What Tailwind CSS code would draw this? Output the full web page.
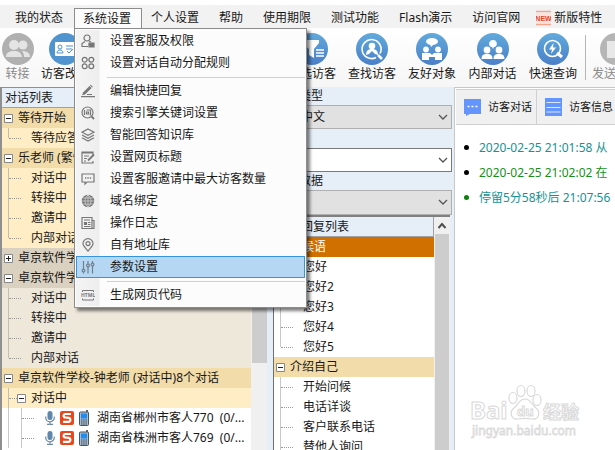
<!DOCTYPE html>
<html lang="zh-CN">
<head>
    <meta charset="UTF-8">
    <meta name="viewport" content="width=device-width, initial-scale=1.0">
    <title>系统设置</title>
    <script src="https://cdn.jsdelivr.net/npm/@tailwindcss/browser@4"></script>
    <style>
        body, button, input, select {
            font-family: 'Noto Sans', 'Noto Sans CJK SC', sans-serif;
        }
    </style>
</head>
<body class="h-screen overflow-hidden flex flex-col bg-white text-xs text-neutral-900 whitespace-nowrap">

    <!-- Menu bar -->
    <nav class="mt-[5px] h-[23px] shrink-0 flex items-end bg-[#f2f2f2] pl-[5px]">
        <button class="h-5 px-2.5">我的状态</button>
        <div class="relative z-10 ml-px -mr-px">
            <button class="block h-5 w-[68px] px-2 border border-b-0 border-[#8c8c8c] bg-[#fcfcfc] text-left">系统设置</button>

            <!-- Drop-down -->
            <div class="absolute left-0 top-5 w-[233px] border border-[#8c8c8c] bg-[#fcfcfc] p-px shadow-[3px_3px_3px_rgba(0,0,0,0.5)]">
                <ul class="bg-linear-to-r from-[#f4f4f4] from-[0px] via-[#eeeeee] via-[23px] to-[#fcfcfc] to-[24px]">
                    <li class="h-[22px]"><button class="flex items-center w-full h-full pl-[5px] gap-[15px]">
                        <svg class="size-3.5" viewBox="0 0 14 14" fill="none" stroke="#777" stroke-width="1.2"><circle cx="6" cy="4" r="3"/><path d="M4 7.5L1 9.5v3h6M8 7l2 1"/><path d="M8 9h5v4H8z" fill="#777"/></svg>
                        设置客服及权限</button></li>
                    <li class="h-[22px]"><button class="flex items-center w-full h-full pl-[5px] gap-[15px]">
                        <svg class="size-3.5" viewBox="0 0 14 14" fill="none" stroke="#777" stroke-width="1.3"><circle cx="3.7" cy="3.7" r="2.4"/><circle cx="10.3" cy="3.7" r="2.4"/><circle cx="3.7" cy="10.3" r="2.4"/><circle cx="10.3" cy="10.3" r="2.4"/></svg>
                        设置对话自动分配规则</button></li>
                    <li class="h-1.5 pt-[3px] pl-[31px]"><hr class="border-[#d0d0d0]"></li>
                    <li class="h-[22px]"><button class="flex items-center w-full h-full pl-[5px] gap-[15px]">
                        <svg class="size-3.5" viewBox="0 0 14 14" fill="#777"><path d="M2 8.500L8.500 2l2 2L4 10.500l-2.800.700zM9 1.500l.8-.7 2 2-.8.700zM0 12h14v1.300H0zM6 10h5v1H6z"/></svg>
                        编辑快捷回复</button></li>
                    <li class="h-[22px]"><button class="flex items-center w-full h-full pl-[5px] gap-[15px]">
                        <svg class="size-3.5" viewBox="0 0 14 14" fill="none" stroke="#777" stroke-width="1.2"><circle cx="6.500" cy="6.500" r="5.500"/><path d="M10.500 10.500L13 13" stroke-width="1.800"/><path d="M3.500 4v5M5.500 4h4v5h-1M5.500 6h2v2h-2z"/></svg>
                        搜索引擎关键词设置</button></li>
                    <li class="h-[22px]"><button class="flex items-center w-full h-full pl-[5px] gap-[15px]">
                        <svg class="size-3.5" viewBox="0 0 14 14" fill="none" stroke="#777" stroke-width="1.2"><path d="M7 1l6 3.200-6 3.200-6-3.200zM1 7l6 3.200L13 7M1 9.800L7 13l6-3.200"/></svg>
                        智能回答知识库</button></li>
                    <li class="h-[22px]"><button class="flex items-center w-full h-full pl-[5px] gap-[15px]">
                        <svg class="size-3.5" viewBox="0 0 14 14" fill="none" stroke="#777" stroke-width="1.2"><path d="M12 5V2H1v11h11v-2M1 3h11M3 6h5M3 8.500h3M3 11h2"/><path d="M7 10.500L13 4.500" stroke-width="1.800"/></svg>
                        设置网页标题</button></li>
                    <li class="h-[22px]"><button class="flex items-center w-full h-full pl-[5px] gap-[15px]">
                        <svg class="size-3.5" viewBox="0 0 14 14" fill="none" stroke="#777" stroke-width="1.2"><path d="M1 2h12v8H6l-2 2v-2H1z"/><path d="M4 6h1.300M6.400 6h1.300M8.800 6h1.300" stroke-width="1.500"/></svg>
                        设置客服邀请中最大访客数量</button></li>
                    <li class="h-[22px]"><button class="flex items-center w-full h-full pl-[5px] gap-[15px]">
                        <svg class="size-3.5" viewBox="0 0 14 14" fill="none"><circle cx="7" cy="7" r="6.200" fill="#777"/><path d="M7 1v12M1 7h12M2 4h10M2 10h10M7 1C3 4 3 10 7 13M7 1c4 3 4 9 0 12" stroke="#ddd" stroke-width=".7"/></svg>
                        域名绑定</button></li>
                    <li class="h-[22px]"><button class="flex items-center w-full h-full pl-[5px] gap-[15px]">
                        <svg class="size-3.5" viewBox="0 0 14 14" fill="none" stroke="#777" stroke-width="1.200"><path d="M1 1.500h10v11H1zM11 4.500h2v8h-2M3 4h6"/><path d="M3.500 6.500h2v2h-2z" fill="#777"/><path d="M7 6.500h2.500M7 8.500h2.500M3 10.500h6.500"/></svg>
                        操作日志</button></li>
                    <li class="h-[22px]"><button class="flex items-center w-full h-full pl-[5px] gap-[15px]">
                        <svg class="size-3.5" viewBox="0 0 14 14" fill="none" stroke="#777" stroke-width="1.200"><path d="M7 13C4 9.500 2 8 2 5.600a5 5 0 0 1 10 0C12 8 10 9.500 7 13z"/><circle cx="7" cy="5.600" r="2"/></svg>
                        自有地址库</button></li>
                    <li class="h-[22px]"><button class="flex items-center w-full h-full pl-1 gap-[15px] border border-[#3594e2] bg-[#b5d7f3]">
                        <svg class="size-3.5" viewBox="0 0 14 14" fill="none" stroke="#71808d" stroke-width="1.200"><path d="M2.500 1v8M2.500 12v1.500M7 1v3M7 7v6.500M11.500 1v2M11.500 6v7.500"/><circle cx="2.500" cy="10.500" r="1.400"/><circle cx="7" cy="5.500" r="1.400"/><circle cx="11.500" cy="4.500" r="1.400"/></svg>
                        参数设置</button></li>
                    <li class="h-1.5 pt-[3px] pl-[31px]"><hr class="border-[#d0d0d0]"></li>
                    <li class="h-[22px]"><button class="flex items-center w-full h-full pl-[5px] gap-[15px]">
                        <svg class="size-3.5" viewBox="0 0 14 14" fill="none" stroke="#777" stroke-width="1"><path d="M1.500 4V2.500h11V4M1.500 10.500V12h11v-1.500"/><text x="0" y="9" font-size="5" font-weight="bold" fill="#777" stroke="none">HTML</text></svg>
                        生成网页代码</button></li>
                </ul>
            </div>
        </div>
        <button class="h-5 px-2.5">个人设置</button>
        <button class="h-5 px-2.5">帮助</button>
        <button class="h-5 px-2.5">使用期限</button>
        <button class="h-5 px-2.5">测试功能</button>
        <button class="h-5 px-2.5">Flash演示</button>
        <button class="h-5 px-2.5">访问官网</button>
        <button class="h-5 px-1.5 flex items-center gap-[3px]">
            <svg class="w-[15px] h-4" viewBox="0 0 15 16"><path d="M0 1.500h15M0 14.500h15" stroke="#f4a58e" stroke-width="1.500"/><path d="M0 3h15v10H0z" fill="#fde3da"/><text x="7.500" y="11" text-anchor="middle" font-family="Liberation Sans, sans-serif" font-size="7" font-weight="bold" fill="#e8442c">NEW</text></svg>
            新版特性
        </button>
    </nav>

    <!-- Toolbar -->
    <header class="h-[59px] shrink-0 flex pt-[5px] bg-linear-to-b from-white to-[#f6f6f6] leading-[18px]">
        <button class="w-[35px] shrink-0 flex flex-col items-center text-[#8a8a8a]">
            <svg class="size-8" viewBox="0 0 32 32"><circle cx="16" cy="16" r="16" fill="#b0b0b0"/><g fill="#e4e4e4"><circle cx="12" cy="12" r="5"/><circle cx="21" cy="12" r="4.500"/><path d="M4 24c0-5 4-6 8-6s7 1 8 6zM20 18c5 0 8 2 8 6h-6c0-3-1-5-2-6z"/></g></svg>
            转接
        </button>
        <button class="w-[60px] shrink-0 flex flex-col items-center">
            <svg class="size-8" viewBox="0 0 32 32"><circle cx="16" cy="16" r="16" fill="#4f93cf"/><rect x="6" y="9" width="20" height="14" rx="1" fill="#fff"/><g fill="none" stroke="#4f93cf"><circle cx="11" cy="14" r="2"/><path d="M8 20c0-4 6-4 6 0zM17 13h7M17 16h6M18 18l2 2 4-4"/></g></svg>
            访客改名
        </button>
        <div class="w-[187px] shrink-0"></div>
        <button class="w-[60px] shrink-0 flex flex-col items-center">
            <svg class="size-8" viewBox="0 0 32 32"><defs><linearGradient id="blue" x2="0" y2="1"><stop stop-color="#61aadc"/><stop offset="1" stop-color="#4a7fc8"/></linearGradient></defs><circle cx="16" cy="16" r="16" fill="url(#blue)"/><path d="M6 7h17v3l-5 6v9l-5-3v-6L6 10z" fill="#fff"/><path d="M20 17h8M20 20h8M20 23h8" stroke="#fff" stroke-width="1.500"/></svg>
            筛选访客
        </button>
        <button class="w-[60px] shrink-0 flex flex-col items-center">
            <svg class="size-8" viewBox="0 0 32 32"><circle cx="16" cy="16" r="16" fill="url(#blue)"/><path d="M20 24.500A9.500 9.500 0 1 1 24 20.500" fill="none" stroke="#fff" stroke-width="1.600"/><path d="M22 22l4 4" stroke="#fff" stroke-width="2.500"/><circle cx="16" cy="13" r="3.300" fill="#fff"/><path d="M10 22c0-4 2-6 6-6s6 2 6 6l-3-1-3-3-3 3z" fill="#fff"/></svg>
            查找访客
        </button>
        <button class="w-[60px] shrink-0 flex flex-col items-center">
            <svg class="size-8" viewBox="0 0 32 32"><circle cx="16" cy="16" r="16" fill="url(#blue)"/><g fill="#fff"><ellipse cx="16" cy="8.500" rx="6" ry="3.500"/><path d="M14 11h4l-3 3z"/><circle cx="10" cy="16.500" r="2.900"/><circle cx="22" cy="16.500" r="2.900"/><path d="M6 20h8l2 2 2-2h8v7h-7v-3h-6v3H6z"/></g></svg>
            友好对象
        </button>
        <button class="w-[61px] shrink-0 flex flex-col items-center">
            <svg class="size-8" viewBox="0 0 32 32"><circle cx="16" cy="16" r="16" fill="url(#blue)"/><g fill="#fff"><path d="M16 7c5 0 5 7 1 7l-1 2-1-2c-4 0-4-7 1-7z"/><circle cx="10" cy="17" r="3.400"/><circle cx="22" cy="17" r="3.400"/><path d="M4.500 26c0-4 2-5 5.500-5s5.500 1 5.500 5zM16.500 26c0-4 2-5 5.500-5s5.500 1 5.500 5z"/></g></svg>
            内部对话
        </button>
        <button class="w-[60px] shrink-0 flex flex-col items-center">
            <svg class="size-8" viewBox="0 0 32 32"><circle cx="16" cy="16" r="16" fill="url(#blue)"/><circle cx="15.500" cy="15.500" r="8" fill="none" stroke="#fff" stroke-width="1.600"/><path d="M20 20l5 4" stroke="#fff" stroke-width="3"/><path d="M16.500 10L12 16.500h3L14 21l5-6.500h-3z" fill="#fff"/></svg>
            快速查询
        </button>
        <div class="w-px h-[45px] mt-0.5 ml-0.5 bg-[#b5b5b5] shrink-0"></div>
        <button class="w-[60px] shrink-0 flex flex-col items-center text-[#8a8a8a]">
            <svg class="size-8" viewBox="0 0 32 32"><circle cx="16" cy="16" r="16" fill="#b5b5b5"/><path d="M7 8h9l4 4v13H7z" fill="#e8e8e8"/></svg>
            发送文件
        </button>
    </header>

    <main class="flex-1 min-h-0 flex bg-[#e6eff8]">

        <!-- Conversation tree -->
        <section class="w-[273px] shrink-0 flex border-l-2 border-t border-[#8f8f8f] overflow-hidden">
            <div class="w-[249px] bg-white">
                <h2 class="h-5 pl-[3px] leading-5 border-b border-[#a0a0a0] bg-[#e6eff8]">对话列表</h2>
                <div class="flex items-center h-5 pl-0.5 gap-[5px] bg-[#f2dcaa]"><svg class="size-[9px]" viewBox="0 0 9 9"><path d="M.5.5h8v8h-8z" fill="#fff" stroke="#888"/><path d="M2 4.500h5" stroke="#222"/></svg>等待开始</div>
                <ul class="bg-[#ffedc5]">
                    <li class="flex items-center h-5 pl-1.5"><i class="w-px h-2.5 self-start bg-[#c4bda9]"></i><i class="w-3 mr-2.5 border-t border-dotted border-[#999]"></i>等待应答</li>
                </ul>
                <div class="flex items-center h-5 pl-0.5 gap-[5px] bg-[#f2dcaa]"><svg class="size-[9px]" viewBox="0 0 9 9"><path d="M.5.5h8v8h-8z" fill="#fff" stroke="#888"/><path d="M2 4.500h5" stroke="#222"/></svg>乐老师 (繁忙)</div>
                <ul class="bg-[#ffedc5]">
                    <li class="flex items-center h-5 pl-1.5"><i class="w-px h-5 bg-[#c4bda9]"></i><i class="w-3 mr-2.5 border-t border-dotted border-[#999]"></i>对话中</li>
                    <li class="flex items-center h-5 pl-1.5"><i class="w-px h-5 bg-[#c4bda9]"></i><i class="w-3 mr-2.5 border-t border-dotted border-[#999]"></i>转接中</li>
                    <li class="flex items-center h-5 pl-1.5"><i class="w-px h-5 bg-[#c4bda9]"></i><i class="w-3 mr-2.5 border-t border-dotted border-[#999]"></i>邀请中</li>
                    <li class="flex items-center h-5 pl-1.5"><i class="w-px h-2.5 self-start bg-[#c4bda9]"></i><i class="w-3 mr-2.5 border-t border-dotted border-[#999]"></i>内部对话</li>
                </ul>
                <div class="flex items-center h-5 pl-0.5 gap-[5px] bg-[#dbd1c0]"><svg class="size-[9px]" viewBox="0 0 9 9"><path d="M.5.5h8v8h-8z" fill="#fff" stroke="#888"/><path d="M2 4.500h5M4.500 2v5" stroke="#222"/></svg>卓京软件学校</div>
                <div class="flex items-center h-5 pl-0.5 gap-[5px] bg-[#dbd1c0]"><svg class="size-[9px]" viewBox="0 0 9 9"><path d="M.5.5h8v8h-8z" fill="#fff" stroke="#888"/><path d="M2 4.500h5" stroke="#222"/></svg>卓京软件学校</div>
                <ul class="bg-[#eee8db]">
                    <li class="flex items-center h-5 pl-1.5"><i class="w-px h-5 bg-[#c4bda9]"></i><i class="w-3 mr-2.5 border-t border-dotted border-[#999]"></i>对话中</li>
                    <li class="flex items-center h-5 pl-1.5"><i class="w-px h-5 bg-[#c4bda9]"></i><i class="w-3 mr-2.5 border-t border-dotted border-[#999]"></i>转接中</li>
                    <li class="flex items-center h-5 pl-1.5"><i class="w-px h-5 bg-[#c4bda9]"></i><i class="w-3 mr-2.5 border-t border-dotted border-[#999]"></i>邀请中</li>
                    <li class="flex items-center h-5 pl-1.5"><i class="w-px h-2.5 self-start bg-[#c4bda9]"></i><i class="w-3 mr-2.5 border-t border-dotted border-[#999]"></i>内部对话</li>
                </ul>
                <div class="flex items-center h-5 pl-0.5 gap-[5px] bg-[#f2dcaa]"><svg class="size-[9px]" viewBox="0 0 9 9"><path d="M.5.5h8v8h-8z" fill="#fff" stroke="#888"/><path d="M2 4.500h5" stroke="#222"/></svg>卓京软件学校-钟老师 (对话中)8个对话</div>
                <div class="flex items-center h-5 pl-1.5 bg-[#ffedc5]"><i class="w-px h-5 bg-[#c4bda9]"></i><i class="w-2 border-t border-dotted border-[#999]"></i><svg class="size-[9px] mr-[5px]" viewBox="0 0 9 9"><path d="M.5.5h8v8h-8z" fill="#fff" stroke="#888"/><path d="M2 4.500h5" stroke="#222"/></svg>对话中</div>
                <ul>
                    <li class="flex items-center h-5 pl-1.5">
                        <i class="w-px h-5 bg-[#c8c8c8]"></i><i class="w-px h-5 ml-3 bg-[#c8c8c8]"></i><i class="w-3 mr-[11px] border-t border-dotted border-[#999]"></i>
                        <svg class="w-2.5 h-3.5" viewBox="0 0 10 14"><rect x="2.500" width="5" height="9" rx="2.500" fill="#5f86ab"/><path d="M.7 5.500v1a4.300 4.300 0 0 0 8.600 0v-1M5 11v2M2 13.300h6" fill="none" stroke="#6d8ba8" stroke-width="1.200"/></svg>
                        <svg class="size-3.5 ml-[5px]" viewBox="0 0 14 14"><rect width="14" height="14" rx="2" fill="#e8481c"/><path d="M11 3H5.500C3 3 3 6.300 5.500 6.500l3 .4c2.500.3 2.500 4 0 4H3" fill="none" stroke="#fff" stroke-width="2.200"/></svg>
                        <svg class="w-2.5 h-4 ml-[5px] mr-2" viewBox="0 0 10 16"><path d="M8 0v3" stroke="#333" stroke-width="1.500"/><rect x=".5" y="2" width="9" height="13.500" rx="1" fill="#a9bccf" stroke="#456"/><path d="M2 3.500h6v5H2z" fill="#1e8cf0"/><path d="M2 10h6M2 12h6M2 14h6" stroke="#345" stroke-dasharray="1.500 .7"/></svg>
                        湖南省郴州市客人770&nbsp; (0/...
                    </li>
                    <li class="flex items-center h-5 pl-1.5">
                        <i class="w-px h-5 bg-[#c8c8c8]"></i><i class="w-px h-5 ml-3 bg-[#c8c8c8]"></i><i class="w-3 mr-[11px] border-t border-dotted border-[#999]"></i>
                        <svg class="w-2.5 h-3.5" viewBox="0 0 10 14"><rect x="2.500" width="5" height="9" rx="2.500" fill="#5f86ab"/><path d="M.7 5.500v1a4.300 4.300 0 0 0 8.600 0v-1M5 11v2M2 13.300h6" fill="none" stroke="#6d8ba8" stroke-width="1.200"/></svg>
                        <svg class="size-3.5 ml-[5px]" viewBox="0 0 14 14"><rect width="14" height="14" rx="2" fill="#e8481c"/><path d="M11 3H5.500C3 3 3 6.300 5.500 6.500l3 .4c2.500.3 2.500 4 0 4H3" fill="none" stroke="#fff" stroke-width="2.200"/></svg>
                        <svg class="w-2.5 h-4 ml-[5px] mr-2" viewBox="0 0 10 16"><path d="M8 0v3" stroke="#333" stroke-width="1.500"/><rect x=".5" y="2" width="9" height="13.500" rx="1" fill="#a9bccf" stroke="#456"/><path d="M2 3.500h6v5H2z" fill="#1e8cf0"/><path d="M2 10h6M2 12h6M2 14h6" stroke="#345" stroke-dasharray="1.500 .7"/></svg>
                        湖南省株洲市客人769&nbsp; (0/...
                    </li>
                </ul>
            </div>
            <div class="w-4 bg-[#f0f0f0] pt-[17px] pl-px"><div class="h-[258px] bg-[#cdcdcd]"></div></div>
        </section>

        <!-- Quick replies -->
        <section class="w-[181px] shrink-0 flex flex-col border-l border-[#6f6f6f] overflow-hidden">
            <label for="kind" class="h-[18px] pl-[25px] leading-[18px]">类型</label>
            <div class="relative mr-0.5">
                <select id="kind" class="block appearance-none w-full h-6 pl-[26px] border border-[#b0b0b0] bg-[#e1e1e1]"><option>中文</option></select>
                <svg class="absolute right-1 top-2 w-2.5 h-2" viewBox="0 0 10 8" fill="none" stroke="#555" stroke-width="1.300"><path d="M1 2l4 4 4-4"/></svg>
            </div>
            <div class="relative mr-0.5 mt-[19px]">
                <input aria-label="搜索" class="block w-full h-6 px-2 border border-[#7a7a7a] bg-white">
                <svg class="absolute right-1 top-2 w-2.5 h-2" viewBox="0 0 10 8" fill="none" stroke="#555" stroke-width="1.300"><path d="M1 2l4 4 4-4"/></svg>
            </div>
            <label for="data" class="h-[18px] pl-[25px] leading-[18px]">数据</label>
            <div class="relative mr-0.5">
                <select id="data" class="block appearance-none w-full h-[25px] pl-[26px] border border-[#b0b0b0] bg-[#e1e1e1]"></select>
                <svg class="absolute right-1 top-2 w-2.5 h-2" viewBox="0 0 10 8" fill="none" stroke="#555" stroke-width="1.300"><path d="M1 2l4 4 4-4"/></svg>
            </div>
            <div class="flex-1 min-h-0 mr-1 flex border-t-2 border-[#808080]">
                <div class="flex-1 bg-white overflow-hidden">
                    <h2 class="h-5 pl-[27px] leading-5 border-b border-r border-[#a0a0a0] bg-[#e6eff8]">回复列表</h2>
                    <div class="flex items-center h-5 pl-4 bg-[#d07000] text-white">问候语</div>
                    <ul>
                        <li class="flex items-center h-5 pl-1.5"><i class="w-px h-5 bg-[#c8c8c8]"></i><i class="w-3 mr-2.5 border-t border-dotted border-[#999]"></i>您好</li>
                        <li class="flex items-center h-5 pl-1.5"><i class="w-px h-5 bg-[#c8c8c8]"></i><i class="w-3 mr-2.5 border-t border-dotted border-[#999]"></i>您好2</li>
                        <li class="flex items-center h-5 pl-1.5"><i class="w-px h-5 bg-[#c8c8c8]"></i><i class="w-3 mr-2.5 border-t border-dotted border-[#999]"></i>您好3</li>
                        <li class="flex items-center h-5 pl-1.5"><i class="w-px h-5 bg-[#c8c8c8]"></i><i class="w-3 mr-2.5 border-t border-dotted border-[#999]"></i>您好4</li>
                        <li class="flex items-center h-5 pl-1.5"><i class="w-px h-2.5 self-start bg-[#c8c8c8]"></i><i class="w-3 mr-2.5 border-t border-dotted border-[#999]"></i>您好5</li>
                    </ul>
                    <div class="flex items-center h-5 pl-0.5 gap-[5px] bg-[#f2dcaa]"><svg class="size-[9px]" viewBox="0 0 9 9"><path d="M.5.5h8v8h-8z" fill="#fff" stroke="#888"/><path d="M2 4.500h5" stroke="#222"/></svg>介绍自己</div>
                    <ul>
                        <li class="flex items-center h-5 pl-1.5"><i class="w-px h-5 bg-[#c8c8c8]"></i><i class="w-3 mr-2.5 border-t border-dotted border-[#999]"></i>开始问候</li>
                        <li class="flex items-center h-5 pl-1.5"><i class="w-px h-5 bg-[#c8c8c8]"></i><i class="w-3 mr-2.5 border-t border-dotted border-[#999]"></i>电话详谈</li>
                        <li class="flex items-center h-5 pl-1.5"><i class="w-px h-5 bg-[#c8c8c8]"></i><i class="w-3 mr-2.5 border-t border-dotted border-[#999]"></i>客户联系电话</li>
                        <li class="flex items-center h-5 pl-1.5"><i class="w-px h-5 bg-[#c8c8c8]"></i><i class="w-3 mr-2.5 border-t border-dotted border-[#999]"></i>替他人询问</li>
                    </ul>
                </div>
                <div class="w-4 flex flex-col bg-[#f0f0f0] px-px">
                    <svg class="w-3.5 h-[17px] shrink-0" viewBox="0 0 14 17" fill="none" stroke="#505050" stroke-width="2"><path d="M3.500 11L7 7l3.500 4"/></svg>
                    <div class="flex-1 bg-[#cdcdcd]"></div>
                </div>
            </div>
        </section>

        <!-- Visitor conversation -->
        <section class="relative flex-1 min-w-0 flex flex-col border-l border-t border-[#c8c8c8] bg-white overflow-hidden">
            <div class="h-9 mt-px ml-px shrink-0 flex bg-[#f0f0f0] border-y border-[#d0d0d0] text-[11px]">
                <button class="w-[81px] shrink-0 flex items-center gap-[7px] pl-2 border-r border-[#d0d0d0]">
                    <svg class="w-[17px] h-[17px]" viewBox="0 0 17 17"><path d="M0 0h17v15H6l-4 2v-2H0z" fill="#6495ff"/><path d="M3.500 7.500h2M7.500 7.500h2M11.500 7.500h2" stroke="#fff" stroke-width="1.500"/></svg>
                    访客对话
                </button>
                <button class="w-[81px] shrink-0 flex items-center gap-[7px] pl-2">
                    <svg class="w-[17px] h-[18px]" viewBox="0 0 17 18"><path d="M0 0h17v18H0z" fill="#6495ff"/><path d="M1.500 4.500h14M1.500 9.500h14M1.500 14h14" stroke="#dbe6ff" stroke-width="1.200"/></svg>
                    访客信息
                </button>
            </div>
            <ul class="pt-2.5 pl-[9px] leading-[25px]">
                <li class="flex items-center gap-2.5 text-[#169292]"><i class="size-[5px] rounded-full bg-black"></i>2020-02-25 21:01:58 从</li>
                <li class="flex items-center gap-2.5 text-[#16901a]"><i class="size-[5px] rounded-full bg-black"></i>2020-02-25 21:02:02 在</li>
                <li class="flex items-center gap-2.5 text-[#169292]"><i class="size-[5px] rounded-full bg-[#0a800a]"></i>停留5分58秒后 21:07:56</li>
            </ul>
            <svg class="absolute right-8 bottom-2 w-[114px] h-[58px]" viewBox="0 0 114 58" fill="#fff" stroke="#d9d9d9">
                <text x="1" y="35" font-size="24" font-weight="bold">Bai</text>
                <g stroke-width="1.200">
                    <ellipse cx="44" cy="14" rx="4" ry="5.500"/><ellipse cx="52" cy="7" rx="4" ry="5.500"/><ellipse cx="62" cy="7" rx="4" ry="5.500"/><ellipse cx="68" cy="16" rx="4" ry="5.500"/>
                    <path d="M56 15c6 0 7 6 11 9 5 4 3 12-4 11-5-1-9-1-14 0-7 1-9-7-4-11 4-3 5-9 11-9z"/>
                </g>
                <text x="48" y="32" font-size="13" font-weight="bold">du</text>
                <text x="74" y="35" font-size="18" font-weight="bold">经验</text>
                <text x="3" y="51" font-size="12" stroke-width=".8">jingyan.baidu.com</text>
            </svg>
        </section>
    </main>
</body>
</html>
